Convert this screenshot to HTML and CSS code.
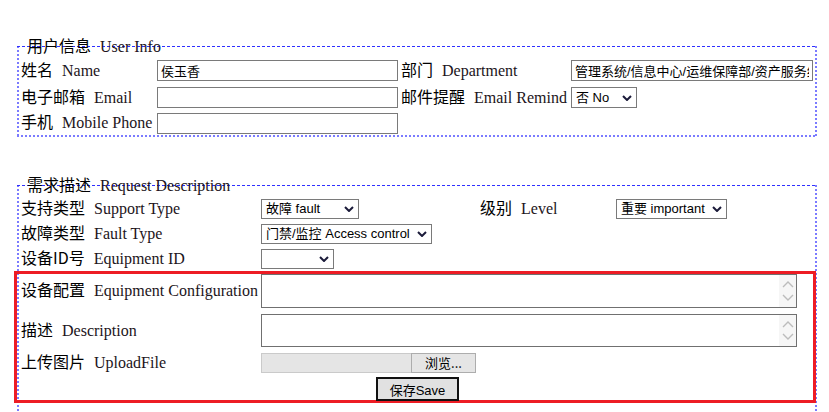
FILE: index.html
```html
<!DOCTYPE html>
<html lang="zh-CN">
<head>
<meta charset="utf-8">
<title>需求单</title>
<link rel="stylesheet" href="styles.css">
</head>
<body>
<div class="panel panel-user">
  <div class="panel-title"><span class="zh">用户信息</span><span class="en">User Info</span></div>
  <div class="grid grid-user">
    <div class="lbl"><span class="zh">姓名</span><span class="en">Name</span></div>
    <div class="ctl"><input class="txt" type="text" value="侯玉香"></div>
    <div class="lbl"><span class="zh">部门</span><span class="en">Department</span></div>
    <div class="ctl"><input class="txt txt-dept" type="text" value="管理系统/信息中心/运维保障部/资产服务组"></div>

    <div class="lbl"><span class="zh">电子邮箱</span><span class="en">Email</span></div>
    <div class="ctl"><input class="txt" type="text" value=""></div>
    <div class="lbl"><span class="zh">邮件提醒</span><span class="en">Email Remind</span></div>
    <div class="ctl">
      <span class="sel sel-remind"><select><option>否 No</option><option>是 Yes</option></select><svg class="chev" viewBox="0 0 10 6"><polyline points="1,1 5,5 9,1"/></svg></span>
    </div>

    <div class="lbl"><span class="zh">手机</span><span class="en">Mobile Phone</span></div>
    <div class="ctl"><input class="txt" type="text" value=""></div>
  </div>
</div>

<div class="panel panel-req">
  <div class="panel-title"><span class="zh">需求描述</span><span class="en">Request Description</span></div>
  <div class="grid grid-req">
    <div class="lbl"><span class="zh">支持类型</span><span class="en">Support Type</span></div>
    <div class="ctl">
      <span class="sel sel-fault"><select><option>故障 fault</option></select><svg class="chev" viewBox="0 0 10 6"><polyline points="1,1 5,5 9,1"/></svg></span>
    </div>
    <div class="lbl"><span class="zh">级别</span><span class="en">Level</span></div>
    <div class="ctl">
      <span class="sel sel-level"><select><option>重要 important</option></select><svg class="chev" viewBox="0 0 10 6"><polyline points="1,1 5,5 9,1"/></svg></span>
    </div>

    <div class="lbl"><span class="zh">故障类型</span><span class="en">Fault Type</span></div>
    <div class="ctl span3">
      <span class="sel sel-type"><select><option>门禁/监控 Access control</option></select><svg class="chev" viewBox="0 0 10 6"><polyline points="1,1 5,5 9,1"/></svg></span>
    </div>

    <div class="lbl"><span class="zh">设备ID号</span><span class="en">Equipment ID</span></div>
    <div class="ctl span3">
      <span class="sel sel-id"><select><option></option></select><svg class="chev" viewBox="0 0 10 6"><polyline points="1,1 5,5 9,1"/></svg></span>
    </div>
  </div>

  <div class="group">
    <div class="grid grid-group">
      <div class="lbl"><span class="zh">设备配置</span><span class="en">Equipment Configuration</span></div>
      <div class="ctl">
        <div class="ta ta-config"><textarea></textarea><div class="sb"><svg class="sb-arrow" viewBox="0 0 12 8"><polyline points="1,7 6,2 11,7"/></svg><svg class="sb-arrow" viewBox="0 0 12 8"><polyline points="1,1 6,6 11,1"/></svg></div></div>
      </div>

      <div class="lbl"><span class="zh">描述</span><span class="en">Description</span></div>
      <div class="ctl">
        <div class="ta ta-desc"><textarea></textarea><div class="sb"><svg class="sb-arrow" viewBox="0 0 12 8"><polyline points="1,7 6,2 11,7"/></svg><svg class="sb-arrow" viewBox="0 0 12 8"><polyline points="1,1 6,6 11,1"/></svg></div></div>
      </div>

      <div class="lbl"><span class="zh">上传图片</span><span class="en">UploadFile</span></div>
      <div class="ctl">
        <div class="file"><div class="file-path"></div><div class="file-btn">浏览...</div></div>
      </div>
    </div>
    <div class="save-row"><button class="save" type="button">保存Save</button></div>
  </div>
</div>
</body>
</html>
```

FILE: styles.css
```css
html, body {
  margin: 0;
  padding: 0;
  background: #fff;
}

body {
  font-family: "Liberation Serif", "Noto Sans CJK SC", serif;
  color: #111;
}

/* panel with a square-dotted frame (2px dots) and a finer dashed top edge */
.panel {
  margin: 0 12px 0 17px;
  padding: 1px 2px 2px 4px;
  background:
    repeating-linear-gradient(to right, #3030ff 0 3px, transparent 3px 5px) left top / 100% 1px no-repeat,
    repeating-linear-gradient(to bottom, #7b7bff 0 2px, transparent 2px 4px) left top / 2px 100% no-repeat,
    repeating-linear-gradient(to bottom, #7b7bff 0 2px, transparent 2px 4px) right top / 2px 100% no-repeat,
    repeating-linear-gradient(to right, #7b7bff 0 2px, transparent 2px 4px) left bottom / 100% 2px no-repeat;
}

.panel-user {
  margin-top: 46px;
}

.panel-req {
  margin-top: 48px;
  padding-bottom: 20px;
}

.panel-title {
  height: 20px;
  line-height: 17px;
  margin: -10px 0 0 6px;
  white-space: nowrap;
}

.zh {
  font-family: "Noto Sans CJK SC", sans-serif;
  font-size: 16px;
  color: #000;
}

.en {
  font-family: "Liberation Serif", serif;
  font-size: 16px;
  margin-left: 9px;
  color: #1c1420;
}

.grid {
  display: grid;
  align-items: center;
}

.grid-user {
  grid-template-columns: 136px 244px 170px 1fr;
  grid-template-rows: 27px 27px 24px;
}

.grid-req {
  grid-template-columns: 240px 219px 136px 1fr;
  grid-template-rows: 25px 25px 25px;
}

.span3 {
  grid-column: span 3;
}

.lbl {
  white-space: nowrap;
  line-height: 18px;
  padding-bottom: 2px;
}

.ctl {
  display: flex;
  align-items: center;
  min-width: 0;
}

.txt {
  box-sizing: border-box;
  width: 241px;
  height: 21px;
  margin: 0;
  border: 1px solid #7a7a7a;
  padding: 0 3px;
  font: 13px "Liberation Sans", "Noto Sans CJK SC", sans-serif;
  color: #000;
  background: #fff;
  outline: none;
}

.txt-dept {
  width: 242px;
}

.sel {
  box-sizing: border-box;
  display: inline-flex;
  align-items: center;
  height: 20px;
  border: 1px solid #7a7a7a;
  background: #fff;
}

.sel select {
  appearance: none;
  -webkit-appearance: none;
  flex: 1;
  min-width: 0;
  height: 100%;
  border: 0;
  margin: 0;
  padding: 0 0 0 4px;
  background: transparent;
  font: 13px "Liberation Sans", "Noto Sans CJK SC", sans-serif;
  color: #000;
  outline: none;
}

.chev {
  flex: none;
  width: 10px;
  height: 6px;
  margin: 0 4px 0 2px;
  fill: none;
  stroke: #1b1b3a;
  stroke-width: 2;
}

.sel-remind { width: 66px; height: 21px; }
.sel-fault { width: 98px; }
.sel-level { width: 111px; }
.sel-type { width: 171px; }
.sel-id { width: 73px; }

.group {
  margin: 0 -1px 0 -7px;
  border: 3px solid #ed1c24;
  padding: 0 0 0 4px;
}

.grid-group {
  grid-template-columns: 240px 1fr;
  grid-template-rows: 34px 33px 20px;
  row-gap: 6px;
}

.ta {
  box-sizing: border-box;
  display: flex;
  width: 536px;
  height: 100%;
  border: 1px solid #707070;
  background: #fff;
}

.ta-config { height: 34px; }
.ta-desc { height: 33px; }

.ta textarea {
  flex: 1;
  border: 0;
  margin: 0;
  padding: 2px;
  resize: none;
  outline: none;
  overflow: hidden;
  font: 13px "Liberation Sans", sans-serif;
}

.sb {
  flex: none;
  width: 17px;
  background: #f6f6f6;
  display: flex;
  flex-direction: column;
  align-items: center;
  justify-content: space-evenly;
}

.sb-arrow {
  width: 12px;
  height: 8px;
  fill: none;
  stroke: #bcbcbc;
  stroke-width: 1.4;
}

.file {
  display: flex;
  height: 20px;
}

.file-path {
  box-sizing: border-box;
  width: 150px;
  height: 20px;
  background: #e5e5e5;
  border: 1px solid #cacaca;
  border-right: 0;
}

.file-btn {
  box-sizing: border-box;
  width: 65px;
  height: 20px;
  background: #e5e5e5;
  border: 1px solid #adadad;
  font: 13px "Noto Sans CJK SC", sans-serif;
  line-height: 18px;
  text-align: center;
  color: #000;
}

.save-row {
  margin-top: 4px;
  height: 23px;
  text-align: center;
}

.save {
  box-sizing: border-box;
  width: 83px;
  height: 24px;
  margin: 0 0 0 1px;
  padding: 0;
  border: 2px solid #111;
  background: #e1e1e1;
  font: 13px "Liberation Sans", "Noto Sans CJK SC", sans-serif;
  color: #000;
  vertical-align: top;
}
```
